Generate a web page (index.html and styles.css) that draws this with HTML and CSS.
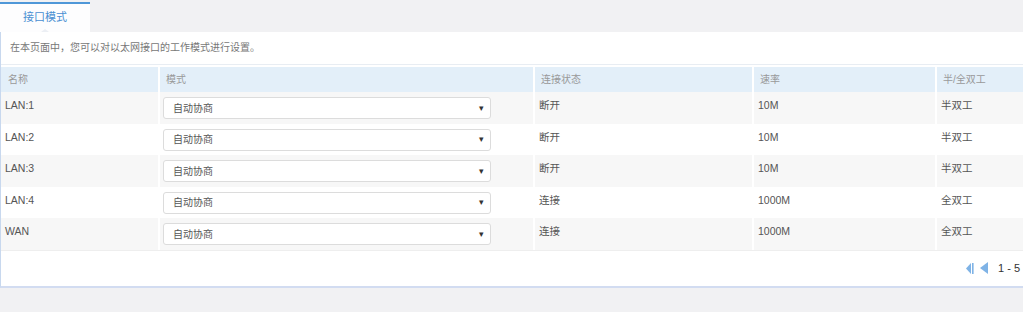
FILE: index.html
```html
<!DOCTYPE html>
<html lang="zh-CN">
<head>
  <meta charset="UTF-8">
  <title>接口模式</title>
  <link rel="stylesheet" href="styles.css">
</head>
<body>
  <div class="tabs">
    <div class="tab">接口模式</div>
  </div>
  <div class="panel">
    <div class="desc">在本页面中，您可以对以太网接口的工作模式进行设置。</div>
    <div class="grid">
      <div class="row head">
        <div class="cell">名称</div>
        <div class="cell">模式</div>
        <div class="cell">连接状态</div>
        <div class="cell">速率</div>
        <div class="cell">半/全双工</div>
      </div>
      <div class="row odd">
        <div class="cell">LAN:1</div>
        <div class="cell sel"><div class="select"><span>自动协商</span><span class="caret">&#9662;</span></div></div>
        <div class="cell">断开</div>
        <div class="cell">10M</div>
        <div class="cell">半双工</div>
      </div>
      <div class="row">
        <div class="cell">LAN:2</div>
        <div class="cell sel"><div class="select"><span>自动协商</span><span class="caret">&#9662;</span></div></div>
        <div class="cell">断开</div>
        <div class="cell">10M</div>
        <div class="cell">半双工</div>
      </div>
      <div class="row odd">
        <div class="cell">LAN:3</div>
        <div class="cell sel"><div class="select"><span>自动协商</span><span class="caret">&#9662;</span></div></div>
        <div class="cell">断开</div>
        <div class="cell">10M</div>
        <div class="cell">半双工</div>
      </div>
      <div class="row">
        <div class="cell">LAN:4</div>
        <div class="cell sel"><div class="select"><span>自动协商</span><span class="caret">&#9662;</span></div></div>
        <div class="cell">连接</div>
        <div class="cell">1000M</div>
        <div class="cell">全双工</div>
      </div>
      <div class="row odd">
        <div class="cell">WAN</div>
        <div class="cell sel"><div class="select"><span>自动协商</span><span class="caret">&#9662;</span></div></div>
        <div class="cell">连接</div>
        <div class="cell">1000M</div>
        <div class="cell">全双工</div>
      </div>
    </div>
    <div class="pager">
      <svg class="pg-icon" width="8" height="11" viewBox="0 0 8 11">
        <polygon points="5,0 5,11 0,5.5" fill="#7fb3e6"/>
        <rect x="6" y="0" width="1.6" height="11" fill="#7fb3e6"/>
      </svg>
      <svg class="pg-icon" width="8" height="12" viewBox="0 0 8 12">
        <polygon points="8,0 8,12 0,6" fill="#7fb3e6"/>
      </svg>
      <span class="range">1 - 5</span>
      <span class="total">共</span>
    </div>
  </div>
</body>
</html>
```

FILE: styles.css
```css
* {
  margin: 0;
  padding: 0;
  box-sizing: border-box;
}

body {
  font-family: "Liberation Sans", "Noto Sans CJK SC", sans-serif;
  font-size: 10px;
  color: #444;
  background-color: #f1f1f3;
  overflow: hidden;
}

.tabs {
  height: 32px;
  padding-top: 2px;
}

.tab {
  position: relative;
  width: 90px;
  height: 30px;
  border-top: 2px solid #4f97d8;
  background: #fdfdfe;
  color: #4a8fd2;
  font-size: 11px;
  line-height: 27px;
  text-align: center;
}

/* small notch under the active tab */
.tab::after {
  content: "";
  position: absolute;
  left: 41px;
  bottom: 0;
  border-left: 4px solid transparent;
  border-right: 4px solid transparent;
  border-bottom: 3px solid #eceff4;
}

.panel {
  width: 1120px;
  background: #fff;
  border-left: 1px solid #c8d8ee;
  border-bottom: 2px solid #d2dcf1;
}

.desc {
  height: 33px;
  padding-left: 9px;
  line-height: 32px;
  color: #777;
  border-bottom: 1px solid #e8edf3;
  margin-bottom: 2px;
}

.row {
  display: grid;
  grid-template-columns: 157px 375px 219px 183px 186px;
  height: 31.5px;
}

.row.odd {
  background: #f7f7f7;
}

.cell {
  padding-left: 4px;
  padding-top: 7px;
  line-height: 13px;
  font-size: 10.5px;
  color: #555;
  border-left: 2px solid #fff;
}

.cell:first-child {
  border-left: none;
}

.row.head {
  height: 25px;
  background: #e3eff9;
}

.row.head .cell {
  padding-top: 0;
  padding-left: 6px;
  line-height: 26px;
  font-size: 10px;
  color: #999;
}

.row.head .cell:first-child {
  padding-left: 7px;
}

.cell.sel {
  padding-left: 3px;
  padding-top: 5px;
}

.select {
  width: 328px;
  height: 22px;
  display: flex;
  align-items: center;
  justify-content: space-between;
  padding: 0 6px 0 9px;
  background: #fff;
  border: 1px solid #dcdcdc;
  border-radius: 3px;
  font-size: 10px;
  color: #555;
}

.caret {
  font-size: 9px;
  color: #333;
}

.pager {
  height: 36px;
  border-top: 1px solid #eeeeee;
  display: flex;
  align-items: center;
  padding-left: 965px;
}

.pg-icon {
  margin-right: 6px;
}

.range {
  margin-left: 4px;
  font-size: 11px;
  color: #333;
}

.total {
  margin-left: 4px;
  font-size: 11px;
  color: #f0a030;
}
```
